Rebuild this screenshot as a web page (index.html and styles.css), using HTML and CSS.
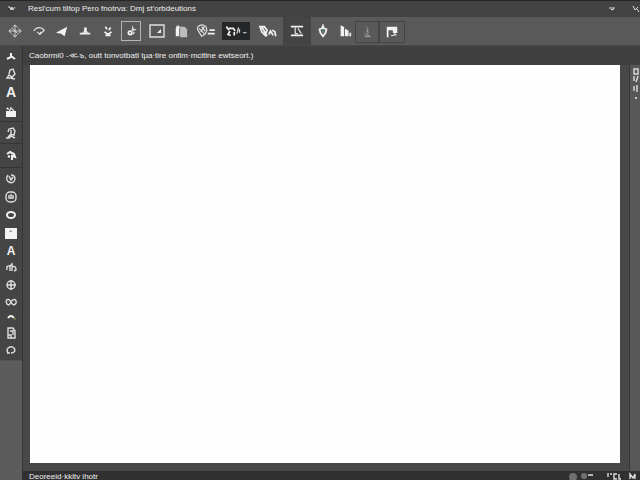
FILE: index.html
```html
<!DOCTYPE html>
<html lang="en">
<head>
<meta charset="utf-8">
<title>Image editor</title>
<link rel="stylesheet" href="styles.css">
</head>
<body>
<div class="app">
  <header class="titlebar">
    <svg class="app-mark" viewBox="0 0 10 8"><path d="M1 2h2l1 3 1-3 1 3 2-3"/></svg>
    <h1>Resl'cum tiltop Pero fnotrva: Dmj st'orbdeutions</h1>
    <div class="window-controls">
      <button aria-label="Minimize"><svg viewBox="0 0 8 8"><path d="M1 3h6M3 4l1 1 2-1"/></svg></button>
      <button aria-label="Close"><svg viewBox="0 0 8 8"><path d="M1 1l2 4 3-3M5 4l2 3"/></svg></button>
    </div>
  </header>
  <nav class="toolbar" aria-label="Tools">
    <button aria-label="Move"><svg viewBox="0 0 16 16"><path d="M8 1v14M1 8h14M5 4l3-3 3 3M5 12l3 3 3-3M4 5L1 8l3 3M12 5l3 3-3 3M5 5l6 6"/></svg></button>
    <button aria-label="Rotate"><svg viewBox="0 0 16 16"><path class="bold" d="M2 8c3-5 9-5 12-1l-5 5-3-3M9 12l1-3"/></svg></button>
    <button aria-label="Pointer"><svg viewBox="0 0 16 16"><path class="fill" d="M14 3L1 10l6 1 4 3z"/></svg></button>
    <button aria-label="Level"><svg viewBox="0 0 16 16"><path class="heavy" d="M2 11h12"/><path class="fill" d="M7 4h3v4l2 2H5l2-2z"/></svg></button>
    <button aria-label="Lower"><svg viewBox="0 0 16 16"><path class="heavy" d="M5 3l2 3M11 4L9 7M4 9l4 3 4-3M5 13h6"/></svg></button>
    <button class="outlined" aria-label="Brush"><svg viewBox="0 0 16 16"><circle class="heavy" cx="7" cy="10" r="2"/><path class="bold" d="M9 9l1-5 1 3 3-1M10 12l2-3"/></svg></button>
    <button aria-label="Frame"><svg class="box" viewBox="0 0 16 14"><path class="bold" d="M1 1h14v12H1z"/><path class="fill" d="M8 9l4-4v4z"/></svg></button>
    <button aria-label="Split"><svg viewBox="0 0 16 16"><path class="fill" d="M3 2h3v12H2V5z"/><path class="soft" d="M7 3h5l3 3v9H7z"/><path d="M3 5l2-3 2 3"/></svg></button>
    <button aria-label="Palette"><svg class="wide" viewBox="0 0 24 16"><path class="bold" d="M3 3q4-4 9 0l1 4q-1 5-6 7L4 9Q1 5 3 3M4 5l6 6M7 3l4 5M10 3L6 9"/><path class="heavy" d="M16 7h6M14 11h8"/></svg></button>
    <button class="preset" aria-label="Preset"><svg class="wide" viewBox="0 0 24 16"><path class="heavy" d="M1 3l3 4M4 5h5l2 3M5 8l-2 4 3 1M10 9v4"/><path class="bold" d="M15 4l-2 7M16 6v4M20 10h4"/></svg></button>
    <button aria-label="Blend"><svg class="wide" viewBox="0 0 24 16"><path class="heavy" d="M4 3h5l3 4-2 6-4-4zM6 3l6 11M14 12l2-4 3 5M18 7l3 2 1 5"/></svg></button>
    <button class="active" aria-label="Align"><svg viewBox="0 0 16 16"><path class="heavy" d="M1 3h14M1 13h14"/><path class="bold" d="M6 4v7h3M9 5l4 6"/></svg></button>
    <button aria-label="Fill"><svg viewBox="0 0 16 16"><path class="heavy" d="M8 2L7 5 4 6l1 4 3 4 3-4 1-4-3-1z"/><path class="accent" d="M8 6v4"/></svg></button>
    <button aria-label="Histogram"><svg viewBox="0 0 16 16"><path class="heavy" d="M4 14V3l2 1v10M9 14V7l2 1v6M14 14v-4"/></svg></button>
    <button class="framed dim" aria-label="Sample"><svg viewBox="0 0 16 16"><path d="M7 2l2 2-1 4M9 6v5l2 2M5 13h7M5 9l4 4"/></svg></button>
    <button class="framed" aria-label="Display"><svg viewBox="0 0 16 16"><path class="fill" d="M2 2h12v7H9V6H4v8H2z"/><path class="bold" d="M7 12h3l1-2 2 2"/></svg></button>
  </nav>
  <div class="workspace">
    <nav class="rail" aria-label="Drawing tools">
      <button aria-label="Anchor"><svg viewBox="0 0 12 12"><path class="heavy" d="M6 3v4l-4 2M6 6l4 3"/></svg></button>
      <button aria-label="Lasso"><svg viewBox="0 0 12 12"><path class="bold" d="M4 6l1-4 3-1 2 5-3 3-3-2-2 3h3l5 1"/></svg></button>
      <button class="letter large">A</button>
      <button class="divided" aria-label="Bag"><svg viewBox="0 0 12 12"><path class="fill" d="M1 5h10v6H1zM1 3l2-2 1 3z"/><path class="bold" d="M4 6l2-4 3 3"/></svg></button>
      <button class="divided" aria-label="Stamp"><svg viewBox="0 0 12 12"><path class="bold" d="M3 5l1-3 4-1 2 3-1 4-3-1-3 3M6 3v6l4 2M1 11h3l2-2"/></svg></button>
      <button class="divided" aria-label="Heal"><svg viewBox="0 0 12 12"><path class="heavy" d="M2 4l3-2 4 2 1 3-3-1v4M3 6l2 1"/></svg></button>
      <button aria-label="History"><svg viewBox="0 0 12 12"><path class="bold" d="M3 3c-5 7 6 11 7 4 0-3-2-4-4-4M4 4l2 4 2-3"/></svg></button>
      <button aria-label="Clock"><svg viewBox="0 0 12 12"><rect class="bold" x="1" y="1" width="10" height="10" rx="4"/><path class="bold" d="M4 4v3h4V4M6 3v3"/></svg></button>
      <button aria-label="Ellipse"><svg viewBox="0 0 12 12"><ellipse class="heavy" cx="6" cy="6" rx="4" ry="3"/></svg></button>
      <button class="selected" aria-label="Shape"><svg viewBox="0 0 12 12"><path class="fill" d="M0 1h12v11H0z"/><path class="ink" d="M5 5V4h2"/></svg></button>
      <button class="letter">A</button>
      <button aria-label="Blur"><svg viewBox="0 0 12 12"><path class="bold" d="M2 8q-1-5 3-4v5M5 4l2-2v7M7 5q4-2 4 3l-2 1"/></svg></button>
      <button aria-label="Globe"><svg viewBox="0 0 12 12"><circle class="bold" cx="6" cy="6" r="4"/><path class="bold" d="M6 1v10M2 6h9"/></svg></button>
      <button aria-label="Link"><svg viewBox="0 0 12 12"><path class="bold" d="M6 6C3 1 0 4 2 8c2 2 3 0 4-2s4-4 5-1-3 6-5 1"/></svg></button>
      <button aria-label="Curve"><svg viewBox="0 0 12 12"><path class="heavy" d="M3 7q3-4 6 0"/><path class="gold" d="M9 8h2"/></svg></button>
      <button aria-label="Clip"><svg viewBox="0 0 12 12"><path class="bold" d="M3 1h5l2 3v7H6V8H3zM5 4h3v4M3 8v3h3"/></svg></button>
      <button aria-label="Reset"><svg viewBox="0 0 12 12"><path class="bold" d="M3 9C0 4 6 1 9 4c2 3 0 5-3 5M2 9h3"/></svg></button>
    </nav>
    <main class="document">
      <p class="hint">Caobrmi0 -≪-ъ, outt tonvotbatl tµa·tire ontlm·mcitlne ewtseort.)</p>
      <div class="stage">
        <div class="canvas"></div>
        <aside class="side" aria-label="Panels">
          <svg viewBox="0 0 8 36"><path class="bold" d="M2 4h4v5H2zM2 11v5M6 11l-2 6M5 20v7M2 21v5"/><circle class="fill" cx="4" cy="33" r="1"/></svg>
        </aside>
      </div>
      <footer class="status">
        <span>Deoreeid·kkltv ihotr</span>
        <svg viewBox="0 0 72 10"><g class="muted"><circle cx="5" cy="6" r="4"/><circle cx="16" cy="5" r="3"/></g><path class="bold" d="M20 4h5M40 2v4M42 3h2M49 3h-3v5h3M51 3v5h2M62 8V3l3 4 2-4v5"/></svg>
      </footer>
    </main>
  </div>
</div>
</body>
</html>
```
FILE: styles.css
```css
* { box-sizing: border-box; }
body {
  margin: 0;
  background: #444;
  color: #f0f0f0;
  font-family: "Liberation Sans", Arial, sans-serif;
}
.app {
  display: flex;
  flex-direction: column;
  height: 100vh;
  overflow: hidden;
}
button {
  display: flex;
  align-items: center;
  justify-content: center;
  min-width: 0;
  padding: 0;
  border: 0;
  background: none;
  color: inherit;
  font: inherit;
}
svg {
  flex: none;
  fill: none;
  stroke: #dedede;
  stroke-width: 1;
}
.bold { stroke-width: 1.4; }
.heavy { stroke-width: 2; stroke: #f0f0f0; }
.fill { fill: #f2f2f2; stroke: none; }
.soft { fill: #bdbdbd; stroke: none; }
.accent { stroke: #4f8c86; stroke-width: 2; }
.gold { stroke: #b09a50; }
.ink { stroke: #777; }
.muted { fill: #707070; stroke: none; }

.titlebar {
  display: flex;
  align-items: center;
  flex: none;
  height: 17px;
  border-top: 1px solid #26262a;
  background: #424242;
}
.app-mark {
  width: 24px;
  height: 8px;
}
.titlebar h1 {
  flex: 1;
  margin: 0 0 0 4px;
  font-size: 8px;
  font-weight: normal;
  line-height: 14px;
  white-space: nowrap;
}
.window-controls {
  display: flex;
  gap: 16px;
}
.window-controls svg {
  width: 8px;
  height: 8px;
}

.toolbar {
  display: grid;
  grid-template-columns: 24px 24px 22px 24px 22px 24px 28px 20px 30px 30px 32px 28px 24px 20px 24px 26px;
  flex: none;
  height: 29px;
  padding-left: 3px;
  border-bottom: 1px solid #484848;
  background: #595959;
}
.toolbar svg {
  width: 14px;
  height: 14px;
}
.toolbar .wide { width: 22px; }
.toolbar .box { width: 16px; }
.toolbar .outlined {
  margin: 4px 2px;
  border: 1px solid #b4b4b4;
}
.toolbar .preset {
  margin: 5px 1px;
  background: #252628;
}
.toolbar .active { background: #444447; }
.toolbar .framed {
  margin: 4px 0 2px;
  border: 1px solid #454545;
}
.toolbar .dim svg { stroke: #aaa; }

.workspace {
  display: flex;
  flex: 1;
  min-height: 0;
}
.rail {
  display: grid;
  grid-template-rows: 20px 16px 20px 20px 22px 24px 20px 18px 18px 18px 18px 16px 18px 16px 14px 18px 16px;
  align-content: start;
  flex: none;
  width: 23px;
  border-right: 1px solid #353535;
  background: linear-gradient(#454545 314px, #5c5c5c 315px);
}
.rail svg {
  width: 12px;
  height: 12px;
}
.rail .divided { border-bottom: 1px solid #353535; }
.letter {
  color: #f2f2f2;
  font-size: 12px;
  font-weight: bold;
}
.large { font-size: 14px; }

.document {
  display: flex;
  flex-direction: column;
  flex: 1;
  min-width: 0;
}
.hint {
  flex: none;
  height: 19px;
  margin: 0;
  padding-left: 6px;
  background: #404040;
  font-size: 8px;
  line-height: 19px;
  white-space: nowrap;
}
.stage {
  display: flex;
  flex: 1;
  gap: 9px;
  min-height: 0;
  padding-left: 7px;
  background: #484848;
}
.canvas {
  flex: 1;
  margin-bottom: 8px;
  background: #fefefe;
}
.side {
  flex: none;
  width: 11px;
  padding-left: 2px;
  border-left: 1px solid #373737;
  background: #575757;
}
.side svg {
  width: 8px;
  height: 36px;
}
.status {
  display: flex;
  justify-content: space-between;
  flex: none;
  height: 9px;
  padding-left: 6px;
  background: #303030;
  font-size: 8px;
  line-height: 12px;
  white-space: nowrap;
}
.status svg {
  width: 72px;
  height: 10px;
}
```
